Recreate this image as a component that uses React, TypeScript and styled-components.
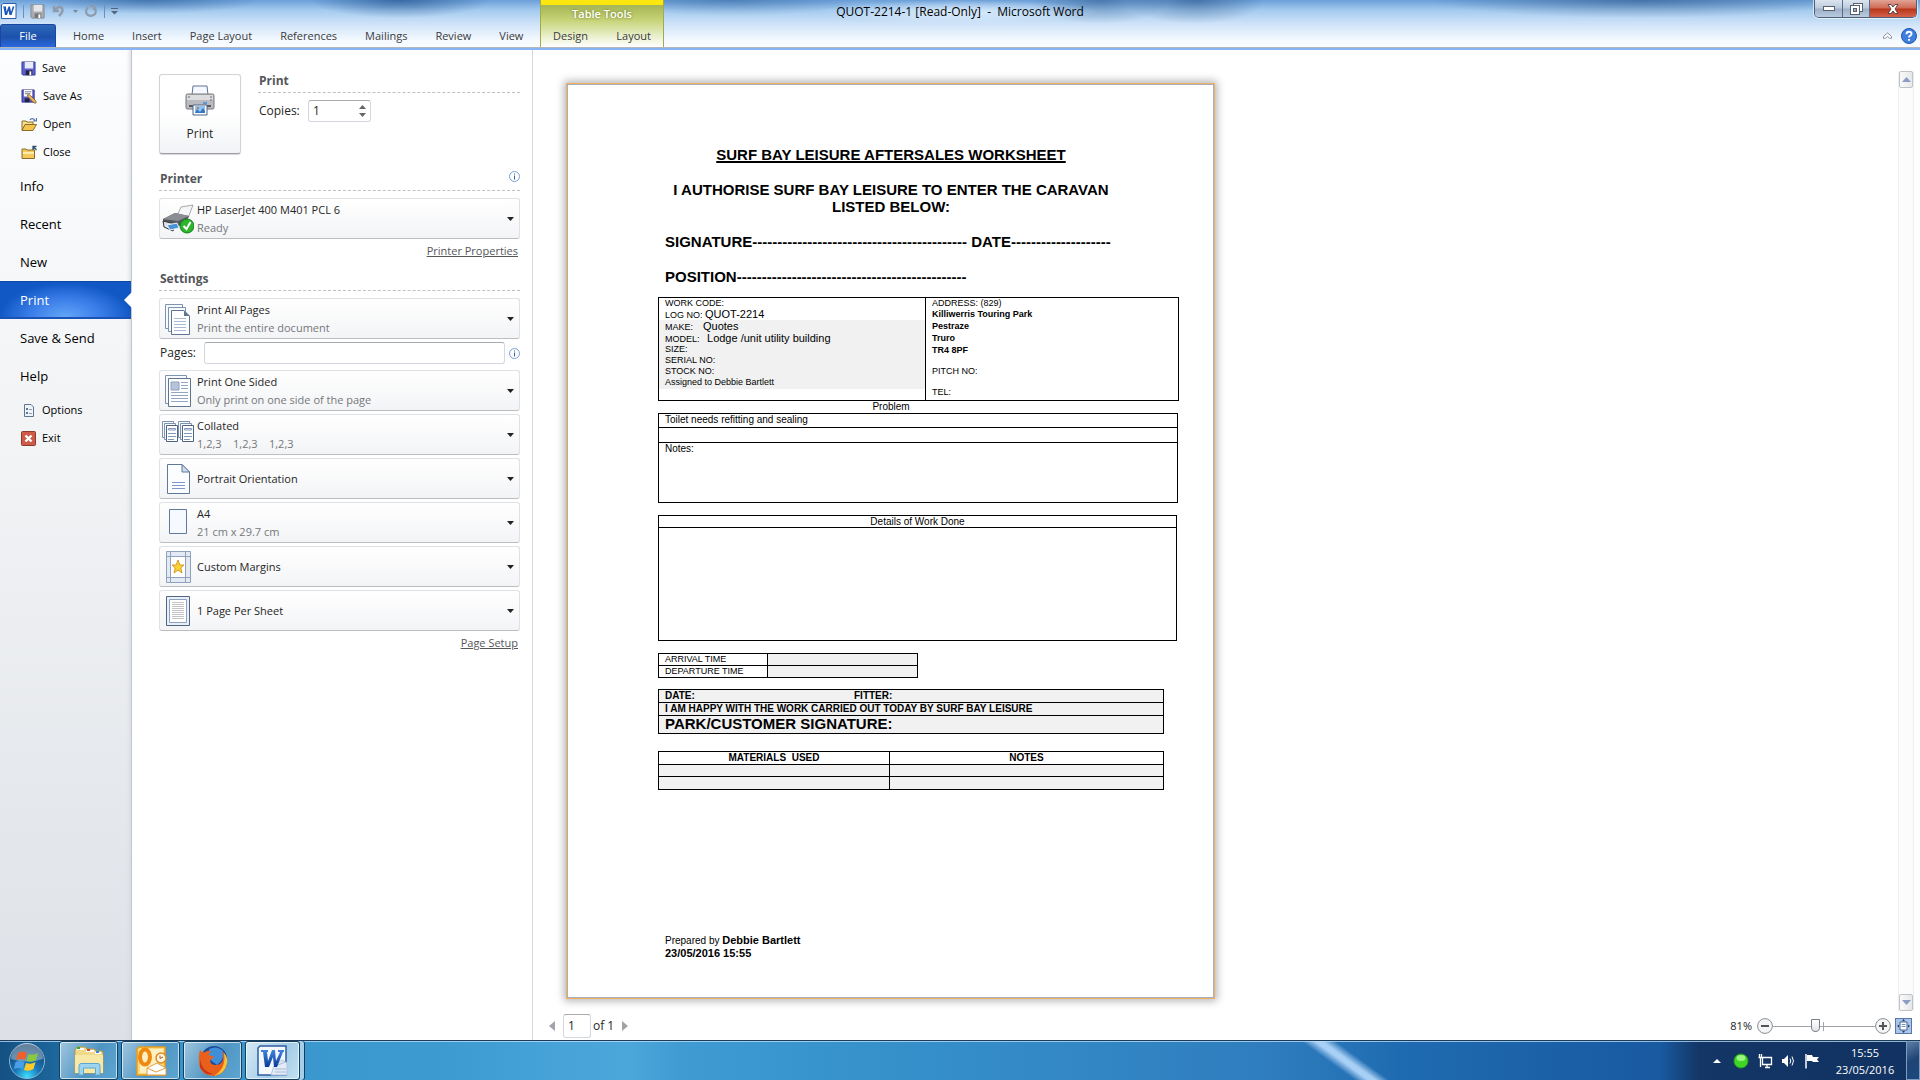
import React from "react";
import styled, { createGlobalStyle, css } from "styled-components";

const ui = `"Open Sans", "Noto Sans", sans-serif`;
const docFont = `"Liberation Sans", Arial, sans-serif`;

const Global = createGlobalStyle`
  *, *::before, *::after { box-sizing: border-box; }
  body { margin: 0; background: #fff; font: 12px/16px ${ui}; color: #262626; font-kerning: none; }
  button, input { font: inherit; color: inherit; margin: 0; }
  button { border: 0; background: none; padding: 0; cursor: pointer; }
  ul, h1, h2, p { margin: 0; padding: 0; list-style: none; }
  svg { display: block; flex: none; }
`;

const Desktop = styled.div`
  min-height: 100vh;
  display: flex;
  flex-direction: column;
`;

/* ---------- title bar and ribbon ---------- */

const Chrome = styled.header`
  height: 50px;
  flex: none;
  display: grid;
  grid-template-rows: 24px 23px;
  border-bottom: 2px solid #86b4f4;
  box-shadow: inset 0 -1px #b3b7bd;
  background:
    radial-gradient(ellipse 110px 14px at 150px 0, rgba(20, 70, 130, 0.45), transparent),
    radial-gradient(ellipse 90px 18px at 400px 0, rgba(20, 70, 130, 0.6), transparent),
    radial-gradient(ellipse 130px 16px at 730px 0, rgba(20, 70, 130, 0.35), transparent),
    radial-gradient(ellipse 70px 24px at 1100px 0, rgba(20, 60, 110, 0.4), transparent),
    radial-gradient(ellipse 70px 24px at 1195px 0, rgba(20, 60, 110, 0.45), transparent),
    radial-gradient(ellipse 210px 18px at 1640px 0, rgba(20, 60, 110, 0.45), transparent),
    linear-gradient(#6b9fd8, #a3caef 10px, #cfe3f8 24px, #f4f9ff 40px, #fbfdff);
`;

const TitleRow = styled.div`
  display: grid;
  grid-template-columns: 540px 1fr 540px;
  align-items: start;
`;

const QuickAccess = styled.div`
  display: flex;
  align-items: center;
  gap: 6px;
  height: 22px;
  padding-left: 1px;
`;

const Divider = styled.span`
  width: 1px;
  height: 13px;
  background: #6d8fb8;
`;

const WindowTitle = styled.h1`
  justify-self: center;
  padding: 0 16px;
  font-size: 12px;
  font-weight: 400;
  line-height: 24px;
  color: #000;
  white-space: pre;
  background: radial-gradient(closest-side, rgba(235, 245, 255, 0.75), transparent);
`;

const WindowButtons = styled.div`
  justify-self: end;
  margin-right: 3px;
  display: flex;
  height: 18px;
  border: 1px solid #4e5f76;
  border-top: 0;
  border-radius: 0 0 5px 5px;
  overflow: hidden;
  box-shadow: 0 0 0 1px rgba(255, 255, 255, 0.6);
`;

const WindowButton = styled.button<{ $close?: boolean }>`
  display: grid;
  place-items: center;
  width: ${(p) => (p.$close ? 47 : 27)}px;
  background: ${(p) =>
    p.$close
      ? "linear-gradient(#e2a396, #cf6a55 8px, #b8351a 9px, #d4634a)"
      : "linear-gradient(#dbe5f0, #bccbdd 8px, #9db0c8 9px, #b9cbe0)"};
  & + & { border-left: 1px solid #5a6b82; }
`;

const TabRow = styled.nav`
  display: flex;
  align-items: stretch;
  font-size: 11px;
`;

const FileTab = styled.button`
  width: 56px;
  color: #fff;
  border: 1px solid #1c46a0;
  border-bottom: 0;
  border-radius: 3px 3px 0 0;
  background: linear-gradient(#2c68b8, #1d51ac 12px, #2a6ae0);
`;

const Tab = styled.button`
  padding: 0 14px;
  color: #3b3b3b;
`;

const TabGroup = styled.div`
  display: flex;
  width: 484px;
  padding-left: 3px;
`;

const Contextual = styled.div`
  display: grid;
  grid-template-rows: 24px 23px;
  width: 124px;
  margin-top: -24px;
  border-left: 1px solid #a3ab46;
  border-right: 1px solid #a3ab46;
  background: linear-gradient(#fbe70d 5px, #a5b455 5px, #c6d377 20px, #e9efcb 36px, #fff);
`;

const ContextTitle = styled.div`
  padding-top: 6px;
  text-align: center;
  font-weight: 600;
  color: #fff;
  text-shadow: 0 0 3px #6c7a20;
`;

const ContextTabs = styled.div`
  display: flex;
  justify-content: space-between;
  padding: 0 12px;
  ${Tab} { padding: 0; }
`;

const RibbonEnd = styled.div`
  margin-left: auto;
  display: flex;
  align-items: center;
  gap: 9px;
  padding-right: 3px;
`;

/* ---------- backstage ---------- */

const Backstage = styled.main`
  flex: 1;
  display: grid;
  grid-template-columns: 132px 401px 1fr;
`;

const Sidebar = styled.nav`
  padding-top: 4px;
  border-right: 1px solid #c3c7cd;
  box-shadow: inset -4px 0 4px -3px #d4d8de;
  background: linear-gradient(#fcfdff, #f0f2f4 45%, #dde0e6);
  color: #000;
`;

const SmallGroup = styled.div`
  display: flex;
  flex-direction: column;
`;

const SmallItem = styled.button`
  display: flex;
  align-items: center;
  gap: 6px;
  height: 28px;
  padding-left: 21px;
  font-size: 11px;
`;

const BigGroup = styled.div`
  display: flex;
  flex-direction: column;
  padding: 1px 0;
`;

const BigItem = styled.button<{ $active?: boolean }>`
  position: relative;
  height: 38px;
  padding-left: 20px;
  text-align: left;
  font-size: 13px;
  ${(p) =>
    p.$active &&
    css`
      color: #fff;
      border-top: 1px solid #0d4aa8;
      border-bottom: 2px solid #1a52b8;
      background: radial-gradient(ellipse 66px 34px at 50% 100%, #62a6f8, #3a7ce8 55%, #1158c4);
      &::after {
        content: "";
        position: absolute;
        right: -1px;
        top: 10px;
        border: 8px solid transparent;
        border-left: 0;
        border-right-color: #fff;
      }
    `}
`;

const Panel = styled.section`
  padding: 24px 12px 0 27px;
  border-right: 1px solid #d6d8dc;
`;

const PrintTop = styled.div`
  display: flex;
  gap: 17px;
`;

const PrintButton = styled.button`
  width: 82px;
  height: 80px;
  display: flex;
  flex-direction: column;
  align-items: center;
  gap: 10px;
  padding-top: 10px;
  border: 1px solid #d0d3d7;
  border-bottom-color: #9c9fa3;
  border-radius: 3px;
  background: linear-gradient(#fff 50%, #f1f3f6);
  box-shadow: 0 1px 1px #d8d8d8;
`;

const PrintOptions = styled.div`
  flex: 1;
  margin-top: -2px;
`;

const SectionHead = styled.div`
  display: flex;
  justify-content: space-between;
  height: 21px;
  padding-top: 1px;
  border-bottom: 1px dashed #bfc1c4;
`;

const SectionTitle = styled.h2`
  padding-left: 1px;
  font-size: 12px;
  line-height: 16px;
  font-weight: 700;
  color: #54565a;
`;

const Section = styled.div<{ $gap: number }>`
  padding-top: ${(p) => p.$gap}px;
`;

const CopiesRow = styled.div`
  display: flex;
  align-items: center;
  gap: 10px;
  margin-top: 7px;
  label { padding-left: 1px; width: 40px; }
`;

const Field = styled.div`
  display: flex;
  align-items: center;
  height: 22px;
  border: 1px solid #d3d8e0;
  border-top-color: #a9abb0;
  border-radius: 3px;
  background: #fff;
  input { border: 0; outline: 0; background: none; width: 100%; min-width: 0; padding: 0 4px; }
`;

const CopiesField = styled(Field)`
  width: 63px;
`;

const Spinner = styled.div`
  display: flex;
  flex-direction: column;
  gap: 4px;
  padding-right: 4px;
`;

const PickerList = styled.div`
  padding-top: 7px;
`;

const Picker = styled.button`
  display: flex;
  align-items: center;
  width: 100%;
  height: 41px;
  margin-bottom: 3px;
  padding: 0 5px 0 2px;
  text-align: left;
  border: 1px solid #e0e1e4;
  border-bottom-color: #bcbec2;
  border-radius: 3px;
  background: linear-gradient(#fff, #f3f4f6);
`;

const PickerIcon = styled.span`
  width: 35px;
  display: grid;
  place-items: center start;
`;

const PickerText = styled.span`
  flex: 1;
  font-size: 11px;
  line-height: 18px;
  white-space: pre;
  small { display: block; font-size: 11px; color: #75777b; }
`;

const PagesRow = styled.div`
  display: flex;
  align-items: center;
  gap: 4px;
  margin-bottom: 6px;
  label { width: 41px; padding-left: 1px; }
  ${Field} { flex: 1; }
`;

const LinkRow = styled.div`
  padding: 1px 2px 0 0;
  text-align: right;
  a { color: #55575b; font-size: 11px; text-decoration: underline; }
`;

/* ---------- preview ---------- */

const Preview = styled.section`
  display: grid;
  grid-template-columns: 1fr 30px;
  grid-template-rows: 1fr 29px;
`;

const Stage = styled.div`
  padding: 33px 0 0 33px;
`;

const Sheet = styled.article`
  width: 649px;
  min-height: 916px;
  display: flex;
  flex-direction: column;
  padding: 62px 34px 0 91px;
  border: 1px solid #eeb062;
  box-shadow: inset 0 0 0 1px #aab0ba, 0 0 8px 2px rgba(0, 0, 0, 0.3);
  background: #fff;
  color: #000;
  font: 9px/11px ${docFont};
`;

const Headings = styled.div`
  padding: 0 63px 0 7px;
  margin-bottom: 12px;
  font-size: 15px;
  line-height: 17px;
  font-weight: 700;
  display: flex;
  flex-direction: column;
  gap: 18px;
  white-space: nowrap;
`;

const Centered = styled.p<{ $underline?: boolean }>`
  text-align: center;
  text-decoration: ${(p) => (p.$underline ? "underline" : "none")};
  text-decoration-thickness: 2px;
`;

const Table = styled.table<{ $w: number; $gap?: number; $shade?: boolean; $text?: number }>`
  width: ${(p) => p.$w}px;
  margin-top: ${(p) => p.$gap ?? 0}px;
  border-collapse: collapse;
  table-layout: fixed;
  font-size: ${(p) => p.$text ?? 10}px;
  td, th {
    padding: 0 6px;
    border: 1px solid #000;
    vertical-align: top;
    text-align: left;
    font-weight: 400;
    background: ${(p) => (p.$shade ? "#f1f1f1" : "none")};
  }
`;

const Row = styled.tr<{ $h: number }>`
  height: ${(p) => p.$h}px;
`;

const Cell = styled.td<{ $shade?: boolean }>`
  && { background: ${(p) => (p.$shade ? "#f1f1f1" : "#fff")}; }
`;

const HeadCell = styled.th<{ $bold?: boolean }>`
  && {
    text-align: center;
    white-space: pre;
    font-weight: ${(p) => (p.$bold ? 700 : 400)};
    background: #fff;
  }
`;

const Big = styled.b`
  font-size: 15px;
`;

const Caption = styled.p`
  padding: 0 63px 0 7px;
  font-size: 10px;
  line-height: 12px;
  text-align: center;
`;

const Line = styled.div<{ $h?: number; $gap?: number }>`
  height: ${(p) => p.$h ?? 11}px;
  line-height: ${(p) => p.$h ?? 11}px;
  margin-top: ${(p) => p.$gap ?? 0}px;
  white-space: pre;
  big { font-size: 11px; }
`;

const Shaded = styled.div`
  margin: 0 -6px;
  padding: 0 6px 1px;
  background: #f1f1f1;
`;

const Split = styled.div`
  display: grid;
  grid-template-columns: 189px 1fr;
`;

const Prepared = styled.div`
  margin: auto 0 38px;
  padding-left: 7px;
  font-size: 10px;
  line-height: 13px;
  b { font-size: 11px; }
`;

const ScrollBar = styled.div`
  width: 16px;
  margin: 21px 7px 0 8px;
  display: flex;
  flex-direction: column;
  justify-content: space-between;
  border: 1px solid #eceef0;
  border-width: 0 1px;
  background: #fcfcfc;
`;

const ScrollButton = styled.button`
  height: 17px;
  display: grid;
  place-items: center;
  border: 1px solid #bfc3c8;
  border-radius: 2px;
  background: linear-gradient(90deg, #fafafa, #e6e8ea);
`;

const StatusBar = styled.div`
  grid-column: 1 / -1;
  display: flex;
  align-items: center;
  justify-content: space-between;
  padding: 0 8px 0 16px;
`;

const Pager = styled.div`
  display: flex;
  align-items: center;
  gap: 8px;
  label { display: flex; align-items: center; gap: 2px; }
  ${Field} { width: 28px; height: 24px; }
`;

const Zoom = styled.div`
  display: flex;
  align-items: center;
  output { margin-right: 5px; font-size: 11px; color: #222; }
  button + button { margin-left: 4px; }
`;

const Slider = styled.input`
  appearance: none;
  width: 102px;
  height: 16px;
  background:
    linear-gradient(#a0a4aa, #a0a4aa) 50px 4px / 1px 9px no-repeat,
    linear-gradient(#a0a4aa, #a0a4aa) 0 8px / 100% 1px no-repeat;
  &::-webkit-slider-thumb {
    appearance: none;
    width: 9px;
    height: 13px;
    border: 1px solid #7b8088;
    border-radius: 1px 1px 5px 5px;
    background: linear-gradient(#fff, #dfe3e8);
  }
`;

/* ---------- taskbar ---------- */

const Taskbar = styled.footer`
  flex: none;
  height: 40px;
  display: flex;
  align-items: stretch;
  border-top: 1px solid #1d3c5c;
  box-shadow: inset 0 1px rgba(190, 225, 250, 0.75);
  background:
    linear-gradient(90deg, transparent 1660px, rgba(18, 48, 92, 0.85) 1700px, rgba(15, 45, 90, 0.85)),
    linear-gradient(36deg, transparent 40%, rgba(175, 212, 248, 0.95) 48%, rgba(175, 212, 248, 0.95) 52%, transparent 60%) 1285px 0 / 120px 100% no-repeat,
    linear-gradient(90deg, #145082, #1b6499 50px, #3794ca 150px, #3d9bd2 450px, #47a3d8 560px, #4ba6da 630px, #3f9bd2 680px, #3590ca 900px, #2f7dbe 1270px, #1f6bb1 1400px, #195ba2 1640px, #1c4f8c);
`;

const Start = styled.button`
  width: 59px;
  padding-left: 8px;
`;

const TaskButton = styled.button<{ $active?: boolean }>`
  width: ${(p) => (p.$active ? 55 : 59)}px;
  margin-right: 3px;
  display: grid;
  place-items: center;
  border: 1px solid #14405f;
  border-radius: 3px;
  box-shadow: inset 0 0 0 1px rgba(255, 255, 255, 0.65)${(p) => (p.$active ? ", 4px 0 0 #a5cfe8, 5px 0 0 #14405f" : "")};
  background: ${(p) =>
    p.$active
      ? "linear-gradient(120deg, #d5e9f5, #a3cce6 60%, #c4e2f2)"
      : "linear-gradient(120deg, #a0c6df, #4f95c3 55%, #5ea6d2)"};
`;

const Tray = styled.div`
  margin-left: auto;
  display: flex;
  align-items: center;
  gap: 8px;
  color: #fff;
`;

const HiddenIcons = styled.button`
  padding-right: 4px;
`;

const Clock = styled.time`
  width: 74px;
  text-align: center;
  font-size: 11px;
  line-height: 17px;
`;

const ShowDesktop = styled.button`
  width: 14px;
  height: 100%;
  margin-left: -4px;
  border: 1px solid #7f9dbd;
  background: linear-gradient(150deg, #5c7fa6, #1f4474 50%, #1b4a80);
`;

/* ---------- icons ---------- */

const Tri = ({ d, w = 7, h = 4, c = "#222" }: { d: string; w?: number; h?: number; c?: string }) => (
  <svg width={w} height={h} viewBox="0 0 8 4" preserveAspectRatio="none" aria-hidden="true">
    <path d={d} fill={c} />
  </svg>
);
const UP = "M0 4L4 0L8 4Z";
const DOWN = "M0 0H8L4 4Z";

const WordMark = ({ size }: { size: number }) => (
  <svg width={size} height={size} viewBox="0 0 32 32" aria-hidden="true">
    <path d="M4 1H30V31H1V4Z" fill="#fff" stroke="#2b5fae" strokeWidth="2" />
    <path d="M4 7H10V9L11 18L15 7H18L20 18L23 9V7H27L21 24H17L15 15L12 24H8L5 9Z" fill="#1a56b5" />
  </svg>
);

const WordIcon = () => (
  <svg width="31" height="31" viewBox="0 0 31 31" aria-hidden="true">
    <defs>
      <linearGradient id="word-w" x1="0" x2="0" y1="0" y2="1">
        <stop offset="0" stopColor="#3f85dc" />
        <stop offset="1" stopColor="#0a3a96" />
      </linearGradient>
    </defs>
    <path d="M3 1H29V30H1V3Z" fill="#f4f8fd" stroke="#2c5c9e" strokeWidth="1.500" />
    <path d="M17 21L25 15L30 18V30H14Z" fill="#e3ebf6" stroke="#b3c4dd" />
    <path d="M19 21L28 17M18 24H29M18 27H29" stroke="#a7bbd8" fill="none" />
    <path d="M4 5H11V7H10L11 16L15 5H18L19 16L23 7H21V5H27V7H26L20 22H17L16 12L12 22H8L6 7H4Z" fill="url(#word-w)" />
  </svg>
);

const Floppy = ({ size = 15, gray = false }: { size?: number; gray?: boolean }) => (
  <svg width={size} height={size} viewBox="0 0 16 16" aria-hidden="true">
    <path d="M1 1H15V15H2L1 14Z" fill={gray ? "#a9adb3" : "#5c60cc"} stroke={gray ? "#85898f" : "#3b3d9c"} />
    <path d="M4 1H13V8H4Z" fill={gray ? "#e4e6e9" : "#e7ecfb"} />
    <path d="M5 10H12V15H5Z" fill={gray ? "#777" : "#23233f"} />
    <path d="M9 11H11V15H9Z" fill="#fff" />
  </svg>
);

const FloppyPen = () => (
  <svg width="16" height="15" viewBox="0 0 17 16" aria-hidden="true">
    <path d="M1 1H14V14H1Z" fill="#5a5cc4" stroke="#33348f" />
    <path d="M3 1H12V8H3Z" fill="#fff" />
    <path d="M4 3H11M4 5H10" stroke="#778" />
    <path d="M4 10H9V14H4Z" fill="#23233f" />
    <path d="M7 6L9 6L16 13V15H14L7 8Z" fill="#e8b65a" stroke="#7a5a28" strokeWidth=".8" />
  </svg>
);

const FolderOpen = () => (
  <svg width="16" height="15" viewBox="0 0 16 15" aria-hidden="true">
    <path d="M1 13V4H5L6 5H12V8" fill="#f6dc8e" stroke="#8a6d2a" />
    <path d="M1 13.500L4 7.500H15.500L12 13.500Z" fill="#f3c34c" stroke="#8a6d2a" />
    <path d="M9 3C10 1 13 1 14 3.500M15.500 1V4H12" fill="none" stroke="#5578a4" strokeWidth="1.200" />
  </svg>
);

const FolderClose = () => (
  <svg width="16" height="15" viewBox="0 0 16 15" aria-hidden="true">
    <path d="M1 13.500V4H5L6 5H13.500V13.500Z" fill="#f3c95c" stroke="#8a6d2a" />
    <path d="M2 7H13V9H2Z" fill="#fdeaae" />
    <path d="M15.500 5L12.500 2M12 5V1.500H15.500" fill="none" stroke="#35506f" strokeWidth="1.300" />
  </svg>
);

const OptionsIcon = () => (
  <svg width="15" height="15" viewBox="0 0 15 15" aria-hidden="true">
    <path d="M3.500 1.500H10L12.500 4V13.500H3.500Z" fill="#eef3fa" stroke="#60758f" />
    <path d="M5 5h2v2H5zM5 9h2v2H5z" fill="#60758f" />
    <path d="M8 6.500h3M8 10.500h3" stroke="#8fa2ba" />
  </svg>
);

const ExitIcon = () => (
  <svg width="15" height="15" viewBox="0 0 15 15" aria-hidden="true">
    <rect x=".5" y=".5" width="14" height="14" rx="1" fill="#cf5a48" stroke="#8d3a2e" />
    <path d="M4.500 4.500L10.500 10.500M10.500 4.500L4.500 10.500" stroke="#fff" strokeWidth="2.400" />
  </svg>
);

const InfoIcon = () => (
  <svg width="11" height="11" viewBox="0 0 11 11" aria-label="Information" role="img">
    <circle cx="5.500" cy="5.500" r="5" fill="#fff" stroke="#7ba0d8" />
    <path d="M5 4.500h1v4H5zM5 2.500h1v1H5z" fill="#2d62b4" />
  </svg>
);

const PrinterIcon = () => (
  <svg width="30" height="31" viewBox="0 0 30 31" aria-hidden="true">
    <path d="M8 1H22L23 10H7Z" fill="#f5f9ff" stroke="#5e7291" />
    <rect x="1" y="9" width="28" height="15" rx="1.500" fill="#b9bbbe" stroke="#76797d" />
    <path d="M2 10H28V15H2Z" fill="#dcdddf" />
    <path d="M4 21H26" stroke="#55585c" strokeWidth="2" />
    <path d="M18 18h4" stroke="#3f8be0" strokeWidth="1.500" />
    <path d="M25 12h2M25 15h2M3 12h2" stroke="#666" />
    <path d="M8 20H22V30H8Z" fill="#fff" stroke="#4d6484" />
    <path d="M10 21H20V28H10Z" fill="#8fc4f2" />
    <path d="M10 28L12 24L15 27L18 23L20 26V28Z" fill="#3776c2" />
    <circle cx="13" cy="23" r="1" fill="#e06030" />
  </svg>
);

const DeviceIcon = () => (
  <svg width="32" height="30" viewBox="0 0 32 30" aria-hidden="true">
    <path d="M19 3L31 1L26 14L15 12Z" fill="#f5f6f8" stroke="#a5a8ac" />
    <path d="M1 15L13 9L27 12L23 20L11 24L1 20Z" fill="#55595f" />
    <path d="M1 15L13 9L27 12L16 17Z" fill="#8b8f95" />
    <path d="M1 17L13 20L11 27L2 23Z" fill="#dfe3e8" stroke="#333" />
    <path d="M5 21L15 19L17 24L8 26Z" fill="#4a92d6" stroke="#e8f1fa" />
    <circle cx="25" cy="22" r="7" fill="#2db52c" stroke="#14801b" />
    <path d="M21.500 22L24.500 25L28.500 18" fill="none" stroke="#fff" strokeWidth="2" />
  </svg>
);

const page = { fill: "#f7faff", stroke: "#7e93b0" };

const AllPagesIcon = () => (
  <svg width="30" height="32" viewBox="0 0 30 32" aria-hidden="true">
    <path d="M3.500 1.500H20.500V25.500H3.500Z" {...page} />
    <path d="M6.500 4.500H23.500V28.500H6.500Z" {...page} />
    <path d="M9.500 7.500H22L27.500 13V31.500H9.500Z" fill="#fff" stroke="#60758f" />
    <path d="M22 7.500V13H27.500Z" fill="#60758f" />
    <path d="M12 15.500h12M12 18.500h12M12 21.500h12M12 24.500h12M12 27.500h12" stroke="#a9b9d4" />
  </svg>
);

const OneSidedIcon = () => (
  <svg width="30" height="34" viewBox="0 0 30 34" aria-hidden="true">
    <path d="M3.500 1.500H24.500V29.500H3.500Z" {...page} />
    <path d="M6.500 4.500H28.500V32.500H6.500Z" fill="#fff" stroke="#60758f" />
    <path d="M9 8H17V16H9Z" fill="#b6c3d8" stroke="#8fa2bf" />
    <path d="M19 8.500h7M19 11.500h7M19 14.500h7M9 18.500h17M9 21.500h17M9 24.500h17M9 27.500h17" stroke="#91a5c4" />
  </svg>
);

const Stack = ({ x }: { x: number }) => (
  <g transform={`translate(${x} 0)`}>
    <path d="M.5 .5H11.500V16.500H.5Z" {...page} />
    <path d="M2.500 2.500H13.500V18.500H2.500Z" {...page} />
    <path d="M4.500 4.500H15.500V20.500H4.500Z" fill="#fff" stroke="#4f6480" />
    <path d="M6.500 7.500h7v1.500h-7zM6 12.500h8M6 15.500h8M6 18.500h6" fill="none" stroke="#8298b8" />
  </g>
);

const CollatedIcon = () => (
  <svg width="33" height="28" viewBox="0 0 33 28" aria-hidden="true">
    <Stack x={0} />
    <Stack x={16} />
  </svg>
);

const PortraitIcon = () => (
  <svg width="30" height="32" viewBox="0 0 30 32" aria-hidden="true">
    <path d="M5.500 1.500H20L27.500 9V30.500H5.500Z" fill="#fbfdff" stroke="#60789a" />
    <path d="M20 1.500V9H27.500Z" fill="#cfdcf0" stroke="#60789a" />
    <path d="M10 19.500h13M10 22.500h13M10 25.500h13" stroke="#7d98c8" />
  </svg>
);

const PaperIcon = () => (
  <svg width="30" height="30" viewBox="0 0 30 30" aria-hidden="true">
    <path d="M7.500 1.500H24.500V25.500H7.500Z" fill="#f6f9ff" stroke="#60789a" />
  </svg>
);

const MarginsIcon = () => (
  <svg width="30" height="32" viewBox="0 0 30 32" aria-hidden="true">
    <path d="M4.500 .5H28.500V31.500H4.500Z" fill="#e3eaf4" stroke="#8fa2bd" />
    <path d="M8.500 5.500H23.500V26.500H8.500Z" fill="#fff" />
    <path d="M8.500 1V31M23.500 1V31M5 5.500H28M5 26.500H28" stroke="#8fa2bd" />
    <path d="M16 9L17.800 14H22L18.800 17L20 22L16 19L12 22L13.200 17L10 14H14.200Z" fill="#fbd234" stroke="#d9992a" />
  </svg>
);

const SheetIcon = () => (
  <svg width="30" height="32" viewBox="0 0 30 32" aria-hidden="true">
    <path d="M4.500 1.500H27.500V30.500H4.500Z" fill="#e9eff8" stroke="#4f6785" />
    <path d="M7.500 4.500H24.500V27.500H7.500Z" fill="#fff" stroke="#8fa2bd" />
    <path d="M10 7.500h12M10 9.500h12M10 11.500h12M10 13.500h12M10 15.500h12M10 17.500h12M10 19.500h12M10 21.500h12M10 23.500h12" stroke="#c4c4c4" />
  </svg>
);

const Orb = () => (
  <svg width="38" height="38" viewBox="0 0 38 38" aria-hidden="true">
    <defs>
      <radialGradient id="orb" cx=".5" cy=".95" r=".9">
        <stop offset="0" stopColor="#3fe0ff" />
        <stop offset=".4" stopColor="#1878b8" />
        <stop offset="1" stopColor="#133c66" />
      </radialGradient>
    </defs>
    <circle cx="19" cy="19" r="17.500" fill="url(#orb)" stroke="#8fb4d0" />
    <path d="M3 17A16 16 0 0 1 35 17Q19 22 3 17Z" fill="#fff" opacity=".35" />
    <path d="M10 11Q14 8 19 11L17 18Q13 16 8 18Z" fill="#f0602a" />
    <path d="M20.500 12Q25 14 30 11L28 18Q24 21 18.500 19Z" fill="#8cc83c" />
    <path d="M7.500 20Q12 18 16.500 20L15 27Q11 25 6 27Z" fill="#4a9fe8" />
    <path d="M18 21Q23 23 27.500 20L25.500 27Q21 30 16 28Z" fill="#fcc92c" />
  </svg>
);

const ExplorerIcon = () => (
  <svg width="34" height="32" viewBox="0 0 34 32" aria-hidden="true">
    <path d="M3 5L5 2H13L15 4H22L24 6H30L31 8V28H3Z" fill="#f0d98a" stroke="#b79a49" />
    <path d="M5 4h7M14 6h8M23 8h6" stroke="#fff" strokeWidth="2" />
    <path d="M5 3h3" stroke="#3aa83a" strokeWidth="2" />
    <path d="M15 5h3" stroke="#d5402a" strokeWidth="2" />
    <path d="M24 7h3" stroke="#3a8ad5" strokeWidth="2" />
    <path d="M3 10H31V28H3Z" fill="#f8e8a8" />
    <path d="M7 30V21Q7 18.500 9 18.500H26Q28 18.500 28 21V30H23.500V23H11.500V30Z" fill="#9dd4ef" stroke="#5aa8d0" />
  </svg>
);

const OutlookIcon = () => (
  <svg width="32" height="32" viewBox="0 0 32 32" aria-hidden="true">
    <path d="M4 2H30V30H2V4Z" fill="#fdd878" stroke="#e89c1c" strokeWidth="1.500" />
    <path d="M5 4H28V14L14 28H5Z" fill="#fff0c4" />
    <path d="M12 23L22 18L31 23V30H12Z" fill="#fff" stroke="#e0a040" />
    <path d="M12 23L21 27L31 23" fill="none" stroke="#e0a040" />
    <ellipse cx="10" cy="12" rx="5" ry="7.500" fill="none" stroke="#ee8a10" strokeWidth="4" />
    <circle cx="26" cy="13" r="5" fill="#fdf6e4" stroke="#e08a18" strokeWidth="1.500" />
    <path d="M25 10.500V13.500L28 12" fill="none" stroke="#b05a10" />
  </svg>
);

const FirefoxIcon = () => (
  <svg width="32" height="32" viewBox="0 0 32 32" aria-hidden="true">
    <circle cx="17" cy="14" r="13" fill="#1c4a96" />
    <path d="M12 4Q20 0 26 6Q28 14 20 20L12 14Z" fill="#3f8fd8" />
    <path d="M3 5Q5 8 8 7Q11 5 14 6Q11 9 13 11H17Q16 14 13 15Q13 20 19 20Q24 20 26 15Q27 10 25 6Q31 11 30 18Q28 30 16 31Q3 30 2 18Q1 11 3 5Z" fill="#e8601c" />
    <path d="M27 8Q31 13 30 18Q28 29 17 31Q25 26 27 18Q28 13 27 8Z" fill="#fbc132" />
    <path d="M3 14Q4 26 16 29Q8 31 3 22Z" fill="#c8341a" />
  </svg>
);

const pickers = [
  { icon: <OneSidedIcon />, title: "Print One Sided", note: "Only print on one side of the page" },
  { icon: <CollatedIcon />, title: "Collated", note: "1,2,3    1,2,3    1,2,3" },
  { icon: <PortraitIcon />, title: "Portrait Orientation" },
  { icon: <PaperIcon />, title: "A4", note: "21 cm x 29.7 cm" },
  { icon: <MarginsIcon />, title: "Custom Margins" },
  { icon: <SheetIcon />, title: "1 Page Per Sheet" },
];

const PickerButton = ({ icon, title, note }: { icon: React.ReactNode; title: string; note?: string }) => (
  <Picker aria-haspopup="listbox">
    <PickerIcon>{icon}</PickerIcon>
    <PickerText>
      {title}
      {note && <small>{note}</small>}
    </PickerText>
    <Tri d={DOWN} />
  </Picker>
);

const Worksheet = () => (
  <Sheet>
    <Headings>
      <Centered $underline>SURF BAY LEISURE AFTERSALES WORKSHEET</Centered>
      <Centered>
        I AUTHORISE SURF BAY LEISURE TO ENTER THE CARAVAN
        <br />
        LISTED BELOW:
      </Centered>
      <p>SIGNATURE{"-".repeat(43)} DATE{"-".repeat(20)}</p>
      <p>POSITION{"-".repeat(46)}</p>
    </Headings>

    <Table $w={521} $text={9}>
      <colgroup><col width="267" /><col /></colgroup>
      <tbody>
        <Row $h={103}>
          <Cell>
            <Line $h={10}>WORK CODE:</Line>
            <Line $h={12}>LOG NO: <big>QUOT-2214</big></Line>
            <Shaded>
              <Line $h={12}>MAKE:    <big>Quotes</big></Line>
              <Line $h={12}>MODEL:   <big>Lodge /unit utility building</big></Line>
              <Line>SIZE:</Line>
              <Line>SERIAL NO:</Line>
              <Line>STOCK NO:</Line>
              <Line>Assigned to Debbie Bartlett</Line>
            </Shaded>
          </Cell>
          <Cell>
            <Line $h={10}>ADDRESS: (829)</Line>
            <Line $h={12}><b>Killiwerris Touring Park</b></Line>
            <Line $h={12}><b>Pestraze</b></Line>
            <Line $h={12}><b>Truro</b></Line>
            <Line $h={12}><b>TR4 8PF</b></Line>
            <Line $gap={10}>PITCH NO:</Line>
            <Line $gap={10}>TEL:</Line>
          </Cell>
        </Row>
      </tbody>
    </Table>

    <Caption>Problem</Caption>
    <Table $w={520}>
      <tbody>
        <Row $h={14}><td>Toilet needs refitting and sealing</td></Row>
        <Row $h={15}><td /></Row>
        <Row $h={60}><td>Notes:</td></Row>
      </tbody>
    </Table>

    <Table $w={519} $gap={12}>
      <thead><Row $h={12}><HeadCell>Details of Work Done</HeadCell></Row></thead>
      <tbody><Row $h={113}><td /></Row></tbody>
    </Table>

    <Table $w={260} $gap={12} $text={9}>
      <colgroup><col width="109" /><col /></colgroup>
      <tbody>
        <Row $h={12}><Cell as="th">ARRIVAL TIME</Cell><Cell $shade /></Row>
        <Row $h={12}><Cell as="th">DEPARTURE TIME</Cell><Cell $shade /></Row>
      </tbody>
    </Table>

    <Table $w={506} $gap={11} $shade>
      <tbody>
        <Row $h={13}><td><Split><b>DATE:</b><b>FITTER:</b></Split></td></Row>
        <Row $h={13}><td><b>I AM HAPPY WITH THE WORK CARRIED OUT TODAY BY SURF BAY LEISURE</b></td></Row>
        <Row $h={18}><td><Line $h={15}><Big>PARK/CUSTOMER SIGNATURE:</Big></Line></td></Row>
      </tbody>
    </Table>

    <Table $w={506} $gap={17} $shade>
      <colgroup><col width="231" /><col /></colgroup>
      <thead><Row $h={13}><HeadCell $bold>MATERIALS  USED</HeadCell><HeadCell $bold>NOTES</HeadCell></Row></thead>
      <tbody>
        <Row $h={12}><td /><td /></Row>
        <Row $h={13}><td /><td /></Row>
      </tbody>
    </Table>

    <Prepared>
      <p>Prepared by <b>Debbie Bartlett</b></p>
      <p><b>23/05/2016 15:55</b></p>
    </Prepared>
  </Sheet>
);

export default function App() {
  return (
    <Desktop>
      <Global />
      <Chrome>
        <TitleRow>
          <QuickAccess>
            <WordMark size={16} />
            <Divider />
            <button aria-label="Save"><Floppy gray /></button>
            <button aria-label="Undo">
              <svg width="16" height="14" viewBox="0 0 16 14"><path d="M3 2V7H8M4 6Q8 1 11 4Q13 7 8 12" fill="none" stroke="#8f9bab" strokeWidth="2.500" /></svg>
            </button>
            <Tri d={DOWN} w={5} h={3} c="#7b8796" />
            <button aria-label="Repeat">
              <svg width="14" height="14" viewBox="0 0 14 14"><path d="M4 3Q0 8 4 11Q8 13 11 10Q13 6 10 3M6 2H10V6" fill="none" stroke="#8f9bab" strokeWidth="2.200" /></svg>
            </button>
            <Divider />
            <button aria-label="Customise toolbar">
              <svg width="7" height="7" viewBox="0 0 7 7"><path d="M0 .5H7" stroke="#55657a" /><path d="M0 3H7L3.500 6.500Z" fill="#55657a" /></svg>
            </button>
          </QuickAccess>
          <WindowTitle>QUOT-2214-1 [Read-Only]  -  Microsoft Word</WindowTitle>
          <WindowButtons>
            <WindowButton aria-label="Minimise">
              <svg width="12" height="5" viewBox="0 0 12 5"><rect x=".5" y=".5" width="11" height="4" fill="#fff" stroke="#56606e" /></svg>
            </WindowButton>
            <WindowButton aria-label="Restore">
              <svg width="13" height="12" viewBox="0 0 13 12"><rect x="3.500" y=".5" width="9" height="8" fill="#fff" stroke="#56606e" /><rect x=".5" y="2.500" width="9" height="9" fill="#fff" stroke="#56606e" /><rect x="3.500" y="5.500" width="3" height="3" fill="#9fb0c6" stroke="#56606e" /></svg>
            </WindowButton>
            <WindowButton $close aria-label="Close">
              <svg width="12" height="10" viewBox="0 0 12 10"><path d="M1 .5H4L6 3L8 .5H11L8 5L11 9.500H8L6 7L4 9.500H1L4 5Z" fill="#fff" stroke="#5e4448" /></svg>
            </WindowButton>
          </WindowButtons>
        </TitleRow>
        <TabRow>
          <FileTab>File</FileTab>
          <TabGroup>
            {["Home", "Insert", "Page Layout", "References", "Mailings", "Review", "View"].map((t) => <Tab key={t}>{t}</Tab>)}
          </TabGroup>
          <Contextual>
            <ContextTitle>Table Tools</ContextTitle>
            <ContextTabs><Tab>Design</Tab><Tab>Layout</Tab></ContextTabs>
          </Contextual>
          <RibbonEnd>
            <button aria-label="Minimise the ribbon">
              <svg width="9" height="7" viewBox="0 0 9 7"><path d="M.5 4.500L4.500 .8L8.500 4.500V6.300H6.500L4.500 4.300L2.500 6.300H.5Z" fill="#fff" stroke="#8b8f96" /></svg>
            </button>
            <button aria-label="Help">
              <svg width="16" height="16" viewBox="0 0 16 16"><circle cx="8" cy="8" r="7.500" fill="#3f7fe0" stroke="#2456a8" /><path d="M5.500 6.200Q5.500 3.700 8 3.700Q10.500 3.700 10.500 6Q10.500 7.200 9 7.900Q8 8.400 8 9.500M8 11V12.800" fill="none" stroke="#fff" strokeWidth="1.900" /></svg>
            </button>
          </RibbonEnd>
        </TabRow>
      </Chrome>

      <Backstage>
        <Sidebar>
          <SmallGroup>
            <SmallItem><Floppy />Save</SmallItem>
            <SmallItem><FloppyPen />Save As</SmallItem>
            <SmallItem><FolderOpen />Open</SmallItem>
            <SmallItem><FolderClose />Close</SmallItem>
          </SmallGroup>
          <BigGroup>
            {["Info", "Recent", "New", "Print", "Save & Send", "Help"].map((t) => <BigItem key={t} $active={t === "Print"}>{t}</BigItem>)}
          </BigGroup>
          <SmallGroup>
            <SmallItem><OptionsIcon />Options</SmallItem>
            <SmallItem><ExitIcon />Exit</SmallItem>
          </SmallGroup>
        </Sidebar>

        <Panel>
          <PrintTop>
            <PrintButton><PrinterIcon />Print</PrintButton>
            <PrintOptions>
              <SectionHead><SectionTitle>Print</SectionTitle></SectionHead>
              <CopiesRow>
                <label htmlFor="copies">Copies:</label>
                <CopiesField>
                  <input id="copies" inputMode="numeric" defaultValue="1" />
                  <Spinner>
                    <button aria-label="More copies"><Tri d={UP} c="#666" /></button>
                    <button aria-label="Fewer copies"><Tri d={DOWN} c="#666" /></button>
                  </Spinner>
                </CopiesField>
              </CopiesRow>
            </PrintOptions>
          </PrintTop>
          <Section $gap={16}>
            <SectionHead><SectionTitle>Printer</SectionTitle><InfoIcon /></SectionHead>
            <PickerList>
              <PickerButton icon={<DeviceIcon />} title="HP LaserJet 400 M401 PCL 6" note="Ready" />
            </PickerList>
            <LinkRow><a href="#printer-properties">Printer Properties</a></LinkRow>
          </Section>
          <Section $gap={11}>
            <SectionHead><SectionTitle>Settings</SectionTitle></SectionHead>
            <PickerList>
              <PickerButton icon={<AllPagesIcon />} title="Print All Pages" note="Print the entire document" />
              <PagesRow>
                <label htmlFor="pages">Pages:</label>
                <Field><input id="pages" /></Field>
                <InfoIcon />
              </PagesRow>
              {pickers.map((p) => <PickerButton key={p.title} {...p} />)}
            </PickerList>
            <LinkRow><a href="#page-setup">Page Setup</a></LinkRow>
          </Section>
        </Panel>

        <Preview>
          <Stage><Worksheet /></Stage>
          <ScrollBar>
            <ScrollButton aria-label="Previous page"><Tri d={UP} w={9} h={5} c="#8d9cc4" /></ScrollButton>
            <ScrollButton aria-label="Next page"><Tri d={DOWN} w={9} h={5} c="#8d9cc4" /></ScrollButton>
          </ScrollBar>
          <StatusBar>
            <Pager>
              <button aria-label="Back"><svg width="6" height="10" viewBox="0 0 6 10"><path d="M6 0V10L0 5Z" fill="#a0a3a8" /></svg></button>
              <label><Field><input aria-label="Current page" defaultValue="1" /></Field>of 1</label>
              <button aria-label="Forward"><svg width="6" height="10" viewBox="0 0 6 10"><path d="M0 0V10L6 5Z" fill="#a0a3a8" /></svg></button>
            </Pager>
            <Zoom>
              <output htmlFor="zoom">81%</output>
              <button aria-label="Zoom out"><svg width="16" height="16" viewBox="0 0 16 16"><circle cx="8" cy="8" r="7.400" fill="#f4f5f6" stroke="#8a8e93" /><path d="M4 8H12" stroke="#555" strokeWidth="2" /></svg></button>
              <Slider id="zoom" aria-label="Zoom" type="range" min="0" max="100" defaultValue="41" />
              <button aria-label="Zoom in"><svg width="16" height="16" viewBox="0 0 16 16"><circle cx="8" cy="8" r="7.400" fill="#f4f5f6" stroke="#8a8e93" /><path d="M4 8H12M8 4V12" stroke="#555" strokeWidth="2" /></svg></button>
              <button aria-label="Zoom to page"><svg width="17" height="16" viewBox="0 0 17 16"><rect x=".5" y=".5" width="16" height="15" fill="#aac4ea" stroke="#5878aa" /><path d="M5 4H12V12H5Z" fill="#fff" stroke="#45638f" /><path d="M6.500 6.500h4M6.500 8.500h4" stroke="#7c95bd" /><path d="M7 3L8.500 1L10 3ZM7 13L8.500 15L10 13ZM4 6.500L2 8L4 9.500ZM13 6.500L15 8L13 9.500Z" fill="#24406c" /></svg></button>
            </Zoom>
          </StatusBar>
        </Preview>
      </Backstage>

      <Taskbar>
        <Start aria-label="Start"><Orb /></Start>
        <TaskButton aria-label="Windows Explorer"><ExplorerIcon /></TaskButton>
        <TaskButton aria-label="Outlook"><OutlookIcon /></TaskButton>
        <TaskButton aria-label="Firefox"><FirefoxIcon /></TaskButton>
        <TaskButton $active aria-label="Word"><WordIcon /></TaskButton>
        <Tray>
          <HiddenIcons aria-label="Show hidden icons"><Tri d={UP} w={8} h={4} c="#fff" /></HiddenIcons>
          <svg width="16" height="16" viewBox="0 0 16 16" aria-hidden="true"><circle cx="8" cy="8" r="7" fill="#3fd627" stroke="#2a9c1c" /><ellipse cx="8" cy="5" rx="4.500" ry="3" fill="#9bf57e" /></svg>
          <svg width="16" height="16" viewBox="0 0 16 16" aria-hidden="true"><path d="M5.500 4.500H14.500V11.500H5.500ZM8 14.500H13M10 12V14M2.500 1V4M4.500 1V4M1.500 4.500H5M3.500 5V14" fill="none" stroke="#fff" strokeWidth="1.300" /></svg>
          <svg width="15" height="16" viewBox="0 0 15 16" aria-hidden="true"><path d="M1 6H3L7 2V14L3 10H1Z" fill="#fff" /><path d="M9 5.500Q10.500 8 9 10.500M11 3.500Q14 8 11 12.500" fill="none" stroke="#fff" /></svg>
          <svg width="16" height="16" viewBox="0 0 16 16" aria-hidden="true"><path d="M2 1V15.500" stroke="#fff" strokeWidth="1.500" /><path d="M3 2H8L9 4H15L13 6.500L15 9H9L8 8H3Z" fill="#fff" /></svg>
          <Clock>15:55<br />23/05/2016</Clock>
          <ShowDesktop aria-label="Show desktop" />
        </Tray>
      </Taskbar>
    </Desktop>
  );
}
